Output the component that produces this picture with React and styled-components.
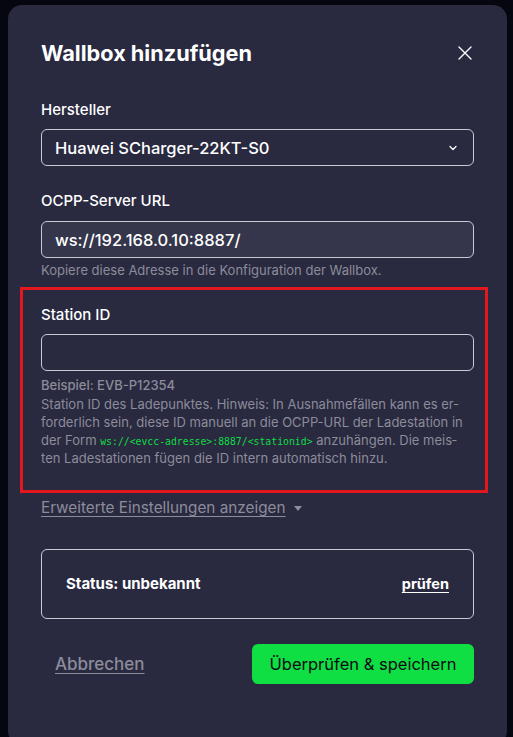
import styled, { createGlobalStyle } from 'styled-components';

const Global = createGlobalStyle`
  html, body {
    margin: 0;
    padding: 0;
    background: #05060f;
    font-family: Inter, "Noto Sans", sans-serif;
    color: #fff;
  }
`

const Page = styled.div`
  height: 737px;
  overflow: hidden;
  padding: 5px 6px 0 8px;
  box-sizing: border-box;
`

const Modal = styled.div`
  background: #29293f;
  border-radius: 14px;
  height: 740px;
  padding: 34px 33px 0 33px;
  box-sizing: border-box;
`

const Header = styled.div`
  display: flex;
  justify-content: space-between;
  align-items: center;
  margin-bottom: 33px;
`

const Title = styled.h1`
  margin: 0;
  font-size: 21.7px;
  font-weight: 700;
  line-height: 28px;
`

const Close = styled.button`
  background: transparent;
  border: 0;
  padding: 0;
  color: #fff;
  display: flex;
`

const Field = styled.div`
  display: flex;
  flex-direction: column;
  margin-bottom: ${p => p.$gap ?? 25}px;
`

const Label = styled.label`
  font-size: 15px;
  font-weight: 500;
  line-height: 20px;
  margin-bottom: ${p => p.$gap ?? 9}px;
`

const Box = styled.div`
  height: 37px;
  box-sizing: border-box;
  border: 1px solid #c9c9d2;
  border-radius: 6px;
  background: ${p => p.$filled ? '#35364b' : 'transparent'};
  display: flex;
  align-items: center;
  justify-content: space-between;
  padding: 0 14px 0 13px;
  font-size: 16.5px;
  font-weight: 500;
`

const Hint = styled.div`
  font-size: 13px;
  color: #8c8c9b;
  line-height: 18.3px;
  margin-top: ${p => p.$top ?? 3}px;
  font-weight: ${p => p.$strong ? 500 : 400};
`

const Code = styled.code`
  font-family: "DejaVu Sans Mono", monospace;
  font-size: 9.8px;
  line-height: 1;
  color: #10dd44;
`

const Highlight = styled.div`
  border: 3px solid #e3171e;
  margin: 0 -14px 0 -21px;
  padding: 15px 11px 22px 18px;
`

const HelpText = styled(Hint)`
  margin-right: 5px;
`

const Toggle = styled.button`
  background: transparent;
  border: 0;
  padding: 0;
  margin-top: 5px;
  height: 20px;
  align-self: flex-start;
  display: flex;
  align-items: center;
  gap: 8px;
  font-family: inherit;
  font-size: 15.3px;
  color: #8c8c9b;
`

const Under = styled.span`
  text-decoration: underline;
  text-underline-offset: 3px;
`

const Caret = styled.span`
  width: 0;
  height: 0;
  border-left: 4px solid transparent;
  border-right: 4px solid transparent;
  border-top: 5px solid #8c8c9b;
  margin-top: 2px;
`

const Status = styled.div`
  margin-top: 31px;
  height: 70px;
  box-sizing: border-box;
  border: 1px solid #c9c9d2;
  border-radius: 6px;
  display: flex;
  align-items: center;
  justify-content: space-between;
  padding: 0 24px 0 24px;
  font-size: 15px;
  font-weight: 700;
`

const LinkButton = styled.button`
  background: transparent;
  border: 0;
  padding: 0;
  font-family: inherit;
  font-size: ${p => p.$size || 14.5}px;
  font-weight: ${p => p.$weight || 700};
  color: ${p => p.$muted ? '#8c8c9b' : '#fff'};
  text-decoration: underline;
  text-underline-offset: 3px;
`

const Footer = styled.div`
  display: flex;
  justify-content: space-between;
  align-items: center;
  margin-top: 25px;
  padding-left: 14px;
`

const Primary = styled.button`
  background: #0fdf42;
  border: 0;
  border-radius: 6px;
  height: 40px;
  width: 222px;
  font-family: inherit;
  font-size: 16.5px;
  font-weight: 400;
  color: #0b0b14;
`

const Chevron = () => (
  <svg width="12" height="12" viewBox="0 0 24 24" fill="none" stroke="#fff" strokeWidth="2.5" strokeLinecap="round" strokeLinejoin="round">
    <path d="m6 9 6 6 6-6" />
  </svg>
)

const XIcon = () => (
  <svg width="18" height="18" viewBox="0 0 24 24" fill="none" stroke="#fff" strokeWidth="1.8" strokeLinecap="round">
    <path d="M4 4l16 16M20 4 4 20" />
  </svg>
)

export default function App() {
  return (
    <>
      <Global />
      <Page>
        <Modal>
          <Header>
            <Title>Wallbox hinzufügen</Title>
            <Close><XIcon /></Close>
          </Header>

          <Field>
            <Label>Hersteller</Label>
            <Box>
              <span>Huawei SCharger-22KT-S0</span>
              <Chevron />
            </Box>
          </Field>

          <Field $gap={8}>
            <Label $gap={10}>OCPP-Server URL</Label>
            <Box $filled>ws://192.168.0.10:8887/</Box>
            <Hint>Kopiere diese Adresse in die Konfiguration der Wallbox.</Hint>
          </Field>

          <Highlight>
            <Field $gap={0}>
              <Label>Station ID</Label>
              <Box />
              <Hint $top={5} $strong>Beispiel: EVB-P12354</Hint>
              <HelpText $top={0}>
                Station ID des Ladepunktes. Hinweis: In Ausnahmefällen kann es er&shy;forderlich sein, diese ID manuell an die OCPP-URL der Ladestation in der Form <Code>ws://&lt;evcc-adresse&gt;:8887/&lt;stationid&gt;</Code> anzuhängen. Die meis&shy;ten Ladestationen fügen die ID intern automatisch hinzu.
              </HelpText>
            </Field>
          </Highlight>

          <Toggle>
            <Under>Erweiterte Einstellungen anzeigen</Under>
            <Caret />
          </Toggle>

          <Status>
            <span>Status: unbekannt</span>
            <LinkButton>prüfen</LinkButton>
          </Status>

          <Footer>
            <LinkButton $muted $size={17} $weight={500}>Abbrechen</LinkButton>
            <Primary>Überprüfen &amp; speichern</Primary>
          </Footer>
        </Modal>
      </Page>
    </>
  )
}
